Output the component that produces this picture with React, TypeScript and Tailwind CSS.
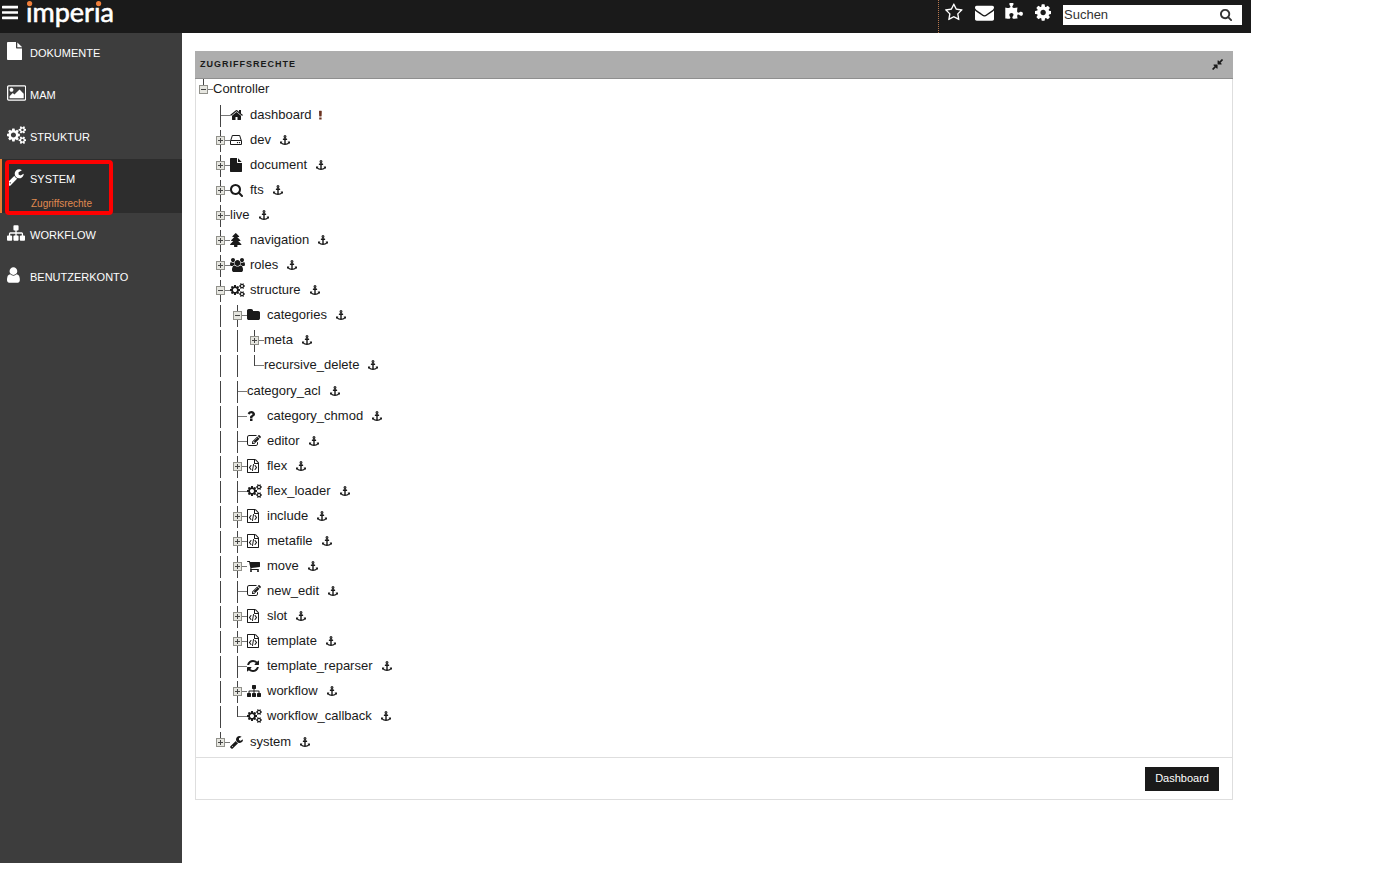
import { useState } from "react"
import type { ReactNode } from "react"

type Glyph = { box: string; d: string }

const glyphs: Record<string, Glyph> = {
  bars: { box: "128 0 1536 1792", d: "M1664 1344v128q0 26-19 45t-45 19h-1408q-26 0-45-19t-19-45v-128q0-26 19-45t45-19h1408q26 0 45 19t19 45zm0-512v128q0 26-19 45t-45 19h-1408q-26 0-45-19t-19-45v-128q0-26 19-45t45-19h1408q26 0 45 19t19 45zm0-512v128q0 26-19 45t-45 19h-1408q-26 0-45-19t-19-45v-128q0-26 19-45t45-19h1408q26 0 45 19t19 45z" },
  file: { box: "128 0 1536 1792", d: "M1152 512v-472q22 14 36 28l408 408q14 14 28 36h-472zm-128 32q0 40 28 68t68 28h544v1056q0 40-28 68t-68 28h-1344q-40 0-68-28t-28-68v-1600q0-40 28-68t68-28h800v544z" },
  picture: { box: "-64 0 1920 1792", d: "M576 576q0 80-56 136t-136 56-136-56-56-136 56-136 136-56 136 56 56 136zm1024 384v448h-1408v-192l320-320 160 160 512-512zm96-704h-1600q-13 0-22.5 9.5t-9.5 22.5v1216q0 13 9.5 22.5t22.5 9.5h1600q13 0 22.5-9.5t9.5-22.5v-1216q0-13-9.5-22.5t-22.5-9.5zm160 32v1216q0 66-47 113t-113 47h-1600q-66 0-113-47t-47-113v-1216q0-66 47-113t113-47h1600q66 0 113 47t47 113z" },
  cogs: { box: "-64 0 1920 1792", d: "M832 896q0-106-75-181t-181-75-181 75-75 181 75 181 181 75 181-75 75-181zm768 512q0-52-38-90t-90-38-90 38-38 90q0 53 37.5 90.5t90.5 37.5 90.5-37.5 37.5-90.5zm0-1024q0-52-38-90t-90-38-90 38-38 90q0 53 37.5 90.5t90.5 37.5 90.5-37.5 37.5-90.5zm-384 421v185q0 10-7 19.5t-16 10.5l-155 24q-11 35-32 76 34 48 90 115 7 11 7 20 0 12-7 19-23 30-82.5 89.5t-78.5 59.5q-11 0-21-7l-115-90q-37 19-77 31-11 108-23 155-7 24-30 24h-186q-11 0-20-7.5t-10-17.5l-23-153q-34-10-75-31l-118 89q-7 7-20 7-11 0-21-8-144-133-144-160 0-9 7-19 10-14 41-53t47-61q-23-44-35-82l-152-24q-10-1-17-9.5t-7-19.5v-185q0-10 7-19.5t16-10.5l155-24q11-35 32-76-34-48-90-115-7-11-7-20 0-12 7-20 22-30 82-89t79-59q11 0 21 7l115 90q34-18 77-32 11-108 23-154 7-24 30-24h186q11 0 20 7.5t10 17.5l23 153q34 10 75 31l118-89q8-7 20-7 11 0 21 8 144 133 144 160 0 8-7 19-12 16-42 54t-45 60q23 48 34 82l152 23q10 2 17 10.5t7 19.5zm640 533v140q0 16-149 31-12 27-30 52 51 113 51 138 0 4-4 7-122 71-124 71-8 0-46-47t-52-68q-20 2-30 2t-30-2q-14 21-52 68t-46 47q-2 0-124-71-4-3-4-7 0-25 51-138-18-25-30-52-149-15-149-31v-140q0-16 149-31 13-29 30-52-51-113-51-138 0-4 4-7 4-2 35-20t59-34 30-16q8 0 46 46.5t52 67.5q20-2 30-2t30 2q51-71 92-112l6-2q4 0 124 70 4 3 4 7 0 25-51 138 17 23 30 52 149 15 149 31zm0-1024v140q0 16-149 31-12 27-30 52 51 113 51 138 0 4-4 7-122 71-124 71-8 0-46-47t-52-68q-20 2-30 2t-30-2q-14 21-52 68t-46 47q-2 0-124-71-4-3-4-7 0-25 51-138-18-25-30-52-149-15-149-31v-140q0-16 149-31 13-29 30-52-51-113-51-138 0-4 4-7 4-2 35-20t59-34 30-16q8 0 46 46.5t52 67.5q20-2 30-2t30 2q51-71 92-112l6-2q4 0 124 70 4 3 4 7 0 25-51 138 17 23 30 52 149 15 149 31z" },
  wrench: { box: "64 0 1728 1792", d: "M448 1472q0-26-19-45t-45-19-45 19-19 45 19 45 45 19 45-19 19-45zm644-420l-682 682q-37 37-90 37-52 0-91-37l-106-108q-38-36-38-90 0-53 38-91l681-681q39 98 114.5 173.5t173.5 114.5zm634-435q0 39-23 106-47 134-164.5 217.5t-258.5 83.5q-185 0-316.5-131.5t-131.5-316.5 131.5-316.5 316.5-131.5q58 0 121.5 16.5t107.5 46.5q16 11 16 28t-16 28l-293 169v224l193 107q5-3 79-48.5t135.5-81 70.5-35.5q15 0 23.5 10t8.5 25z" },
  sitemap: { box: "0 0 1792 1792", d: "M1792 1248v320q0 40-28 68t-68 28h-320q-40 0-68-28t-28-68v-320q0-40 28-68t68-28h96v-192h-512v192h96q40 0 68 28t28 68v320q0 40-28 68t-68 28h-320q-40 0-68-28t-28-68v-320q0-40 28-68t68-28h96v-192h-512v192h96q40 0 68 28t28 68v320q0 40-28 68t-68 28h-320q-40 0-68-28t-28-68v-320q0-40 28-68t68-28h96v-192q0-52 38-90t90-38h512v-192h-96q-40 0-68-28t-28-68v-320q0-40 28-68t68-28h320q40 0 68 28t28 68v320q0 40-28 68t-68 28h-96v192h512q52 0 90 38t38 90v192h96q40 0 68 28t28 68z" },
  user: { box: "256 0 1280 1792", d: "M1536 1399q0 109-62.5 187t-150.5 78h-854q-88 0-150.5-78t-62.5-187q0-85 8.5-160.5t31.5-152 58.5-131 94-89 134.5-34.5q131 128 313 128t313-128q76 0 134.5 34.5t94 89 58.5 131 31.5 152 8.5 160.5zm-256-887q0 159-112.5 271.5t-271.5 112.5-271.5-112.5-112.5-271.5 112.5-271.5 271.5-112.5 271.5 112.5 112.5 271.5z" },
  star: { box: "64 0 1664 1792", d: "M1201 1004l306-297-422-62-189-382-189 382-422 62 306 297-73 421 378-199 377 199zm527-357q0 22-26 48l-363 354 86 500q1 7 1 20 0 50-41 50-19 0-40-12l-449-236-449 236q-22 12-40 12-21 0-31.5-14.5t-10.5-35.5q0-6 2-20l86-500-364-354q-25-27-25-48 0-37 56-46l502-73 225-455q19-41 49-41t49 41l225 455 502 73q56 9 56 46z" },
  envelope: { box: "0 0 1792 1792", d: "M1792 710v794q0 66-47 113t-113 47h-1472q-66 0-113-47t-47-113v-794q44 49 101 87 362 246 497 345 57 42 92.5 65.5t94.5 48 110 24.5h2q51 0 110-24.5t94.5-48 92.5-65.5q170-123 498-345 57-39 100-87zm0-294q0 79-49 151t-122 123q-376 261-468 325-10 7-42.5 30.5t-54 38-52 32.5-57.5 27-50 9h-2q-23 0-50-9t-57.5-27-52-32.5-54-38-42.5-30.5q-91-64-262-182.5t-205-142.5q-62-42-117-115.5t-55-136.5q0-78 41.5-130t118.5-52h1472q65 0 112.5 47t47.5 113z" },
  puzzle: { box: "64 0 1728 1792", d: "M1755 1018q0 81-44.5 135t-123.5 54q-41 0-77.5-17.5t-59-38-56.5-38-71-17.5q-110 0-110 124 0 39 16 115t15 115v5q-22 0-33 1-34 3-97.5 11.5t-115.5 13.5-98 5q-61 0-103-26.5t-42-83.5q0-37 17.5-71t38-56.5 38-59 17.5-77.5q0-79-54-123.5t-135-44.5q-84 0-143 45.5t-59 127.5q0 43 15 83t33.5 64.5 33.5 53 15 50.5q0 45-46 89-37 35-117 35-95 0-245-24-9-2-27.5-4t-27.5-4l-13-2q-1 0-3-1-2 0-2-1v-1024q2 1 17.5 3.5t34 5 21.5 3.5q150 24 245 24 80 0 117-35 46-44 46-89 0-22-15-50.5t-33.5-53-33.5-64.5-15-83q0-82 59-127.5t144-45.5q80 0 134 44.5t54 123.5q0 41-17.5 77.5t-38 59-38 56.5-17.5 71q0 57 42 83.5t103 26.5q64 0 180-15t163-17v2q-1 2-3.5 17.5t-5 34-3.5 21.5q-24 150-24 245 0 80 35 117 44 46 89 46 22 0 50.5-15t53-33.5 64.5-33.5 83-15q82 0 127.5 59t45.5 143z" },
  cog: { box: "128 0 1536 1792", d: "M1152 896q0-106-75-181t-181-75-181 75-75 181 75 181 181 75 181-75 75-181zm512-109v222q0 12-8 23t-20 13l-185 28q-19 54-39 91 35 50 107 138 10 12 10 25t-9 23q-27 37-99 108t-94 71q-12 0-26-9l-138-108q-44 23-91 38-16 136-29 186-7 28-36 28h-222q-14 0-24.5-8.5t-11.5-21.5l-28-184q-49-16-90-37l-141 107q-10 9-25 9-14 0-25-11-126-114-165-168-7-10-7-23 0-12 8-23 15-21 51-66.5t54-70.5q-27-50-41-99l-183-27q-13-2-21-12.5t-8-23.5v-222q0-12 8-23t19-13l186-28q14-46 39-92-40-57-107-138-10-12-10-24 0-10 9-23 26-36 98.5-107.5t94.5-71.5q13 0 26 10l138 107q44-23 91-38 16-136 29-186 7-28 36-28h222q14 0 24.5 8.5t11.5 21.5l28 184q49 16 90 37l142-107q9-9 24-9 13 0 25 10 129 119 165 170 7 8 7 22 0 12-8 23-15 21-51 66.5t-54 70.5q26 50 41 98l183 28q13 2 21 12.5t8 23.5z" },
  search: { box: "64 0 1664 1792", d: "M1216 832q0-185-131.5-316.5t-316.5-131.5-316.5 131.5-131.5 316.5 131.5 316.5 316.5 131.5 316.5-131.5 131.5-316.5zm512 832q0 52-38 90t-90 38q-54 0-90-38l-343-342q-179 124-399 124-143 0-273.5-55.5t-225-150-150-225-55.5-273.5 55.5-273.5 150-225 225-150 273.5-55.5 273.5 55.5 225 150 150 225 55.5 273.5q0 220-124 399l343 343q37 37 37 90z" },
  compress: { box: "128 0 1536 1792", d: "M896 960v448q0 26-19 45t-45 19-45-19l-144-144-332 332q-10 10-23 10t-23-10l-114-114q-10-10-10-23t10-23l332-332-144-144q-19-19-19-45t19-45 45-19h448q26 0 45 19t19 45zm755-672q0 13-10 23l-332 332 144 144q19 19 19 45t-19 45-45 19h-448q-26 0-45-19t-19-45v-448q0-26 19-45t45-19 45 19l144 144 332-332q10-10 23-10t23 10l114 114q10 10 10 23z" },
  home: { box: "64 0 1664 1792", d: "M1472 992v480q0 26-19 45t-45 19h-384v-384h-256v384h-384q-26 0-45-19t-19-45v-480q0-1 .5-3t.5-3l575-474 575 474q1 2 1 6zm223-69l-62 74q-8 9-21 11h-3q-13 0-21-7l-692-577-692 577q-12 8-24 7-13-2-21-11l-62-74q-8-10-7-23.5t11-21.5l719-599q32-26 76-26t76 26l244 204v-195q0-14 9-23t23-9h192q14 0 23 9t9 23v408l219 182q10 8 11 21.5t-7 23.5z" },
  hdd: { box: "128 0 1536 1792", d: "M1168 1216q0 33-23.5 56.5t-56.5 23.5-56.5-23.5-23.5-56.5 23.5-56.5 56.5-23.5 56.5 23.5 23.5 56.5zm256 0q0 33-23.5 56.5t-56.5 23.5-56.5-23.5-23.5-56.5 23.5-56.5 56.5-23.5 56.5 23.5 23.5 56.5zm112 160v-320q0-13-9.5-22.5t-22.5-9.5h-1216q-13 0-22.5 9.5t-9.5 22.5v320q0 13 9.5 22.5t22.5 9.5h1216q13 0 22.5-9.5t9.5-22.5zm-1230-480h1180l-157-482q-4-13-16-21.5t-26-8.5h-782q-14 0-26 8.5t-16 21.5zm1358 160v320q0 66-47 113t-113 47h-1216q-66 0-113-47t-47-113v-320q0-25 16-75l197-606q17-53 63-86t101-33h782q55 0 101 33t63 86l197 606q16 50 16 75z" },
  tree: { box: "128 0 1536 1792", d: "M1600 1472q0 26-19 45t-45 19h-462q1 17 6 87.5t5 108.5q0 25-18 42.5t-43 17.5h-320q-25 0-43-17.5t-18-42.5q0-38 5-108.5t6-87.5h-462q-26 0-45-19t-19-45 19-45l402-403h-229q-26 0-45-19t-19-45 19-45l402-403h-197q-26 0-45-19t-19-45 19-45l384-384q19-19 45-19t45 19l384 384q19 19 19 45t-19 45-45 19h-197l402 403q19 19 19 45t-19 45-45 19h-229l402 403q19 19 19 45z" },
  users: { box: "-64 0 1920 1792", d: "M529 896q-162 5-265 128h-134q-82 0-138-40.5t-56-118.5q0-353 124-353 6 0 43.5 21t97.5 42.5 119 21.5q67 0 133-23-5 37-5 66 0 159 81 256zm1071 637q0 120-73 189.5t-194 69.5h-874q-121 0-194-69.5t-73-189.5q0-53 3.5-103.5t14-109 26.5-108.5 43-97.5 62-81 85.5-53.5 111.5-20q10 0 43 21.5t73 48 107 48 135 21.5 135-21.5 107-48 73-48 43-21.5q61 0 111.5 20t85.5 53.5 62 81 43 97.5 26.5 108.5 14 109 3.5 103.5zm-1024-1277q0 106-75 181t-181 75-181-75-75-181 75-181 181-75 181 75 75 181zm704 384q0 159-112.5 271.5t-271.5 112.5-271.5-112.5-112.5-271.5 112.5-271.5 271.5-112.5 271.5 112.5 112.5 271.5zm576 225q0 78-56 118.5t-138 40.5h-134q-103-123-265-128 81-97 81-256 0-29-5-66 66 23 133 23 59 0 119-21.5t97.5-42.5 43.5-21q124 0 124 353zm-128-609q0 106-75 181t-181 75-181-75-75-181 75-181 181-75 181 75 75 181z" },
  folder: { box: "64 0 1664 1792", d: "M1728 608v704q0 92-66 158t-158 66h-1216q-92 0-158-66t-66-158v-960q0-92 66-158t158-66h320q92 0 158 66t66 158v32h672q92 0 158 66t66 158z" },
  question: { box: "384 0 1024 1792", d: "M1088 1256v240q0 16-12 28t-28 12h-240q-16 0-28-12t-12-28v-240q0-16 12-28t28-12h240q16 0 28 12t12 28zm316-600q0 54-15.5 101t-35 76.5-55 59.5-57.5 43.5-61 35.5q-41 23-68.5 65t-27.5 67q0 17-12 32.5t-28 15.5h-240q-15 0-25.5-18.5t-10.5-37.5v-45q0-83 65-156.5t143-108.5q59-27 84-56t25-76q0-42-46.5-74t-107.5-32q-65 0-108 29-35 25-107 115-13 16-31 16-12 0-25-8l-164-125q-13-10-15.5-25t5.5-28q160-266 464-266 80 0 161 31t146 83 106 127.5 41 158.5z" },
  edit: { box: "0 0 1792 1792", d: "M888 1184l116-116-152-152-116 116v56h96v96h56zm440-720q-16-16-33 1l-350 350q-17 17-1 33t33-1l350-350q17-17 1-33zm80 594v190q0 119-84.5 203.5t-203.5 84.5h-832q-119 0-203.5-84.5t-84.5-203.5v-832q0-119 84.5-203.5t203.5-84.5h832q63 0 117 25 15 7 18 23 3 17-9 29l-49 49q-14 14-32 8-23-6-45-6h-832q-66 0-113 47t-47 113v832q0 66 47 113t113 47h832q66 0 113-47t47-113v-126q0-13 9-22l64-64q15-15 35-7t20 29zm-96-738l288 288-672 672h-288v-288zm444 132l-92 92-288-288 92-92q28-28 68-28t68 28l152 152q28 28 28 68t-28 68z" },
  code: { box: "128 0 1536 1792", d: "M1596 380q28 28 48 76t20 88v1152q0 40-28 68t-68 28h-1344q-40 0-68-28t-28-68v-1600q0-40 28-68t68-28h896q40 0 88 20t76 48zm-444-244v376h376q-10-29-22-41l-313-313q-12-12-41-22zm384 1528v-1024h-416q-40 0-68-28t-28-68v-416h-768v1536h1280zm-928-896q8-11 21-12.5t24 6.5l51 38q11 8 12.5 21t-6.5 24l-182 243 182 243q8 11 6.5 24t-12.5 21l-51 38q-11 8-24 6.5t-21-12.5l-226-301q-14-19 0-38zm802 301q14 19 0 38l-226 301q-8 11-21 12.5t-24-6.5l-51-38q-11-8-12.5-21t6.5-24l182-243-182-243q-8-11-6.5-24t12.5-21l51-38q11-8 24-6.5t21 12.5zm-620 461q-13-2-20.5-13t-5.5-24l138-831q2-13 13-20.5t24-5.5l63 10q13 2 20.5 13t5.5 24l-138 831q-2 13-13 20.5t-24 5.5z" },
  cart: { box: "64 0 1664 1792", d: "M704 1536q0 52-38 90t-90 38-90-38-38-90 38-90 90-38 90 38 38 90zm896 0q0 52-38 90t-90 38-90-38-38-90 38-90 90-38 90 38 38 90zm128-1088v512q0 24-16.5 42.5t-40.5 21.5l-1044 122q13 60 13 70 0 16-24 64h920q26 0 45 19t19 45-19 45-45 19h-1024q-26 0-45-19t-19-45q0-11 8-31.5t16-36 21.5-40 15.5-29.5l-177-823h-204q-26 0-45-19t-19-45 19-45 45-19h256q16 0 28.5 6.5t19.5 15.5 13 24.5 8 26 5.5 29.5 4.5 26h1201q26 0 45 19t19 45z" },
  refresh: { box: "128 0 1536 1792", d: "M1639 1056q0 5-1 7-64 268-268 434.5t-478 166.5q-146 0-282.5-55t-243.5-157l-129 129q-19 19-45 19t-45-19-19-45v-448q0-26 19-45t45-19h448q26 0 45 19t19 45-19 45l-137 137q71 66 161 102t187 36q134 0 250-65t186-179q11-17 53-117 8-23 30-23h192q13 0 22.5 9.5t9.5 22.5zm25-800v448q0 26-19 45t-45 19h-448q-26 0-45-19t-19-45 19-45l138-138q-148-137-349-137-134 0-250 65t-186 179q-11 17-53 117-8 23-30 23h-199q-13 0-22.5-9.5t-9.5-22.5v-7q65-268 270-434.5t480-166.5q146 0 284 55.5t245 156.5l130-129q19-19 45-19t45 19 19 45z" },
  anchor: { box: "0 0 1792 1792", d: "M960 256q0-26-19-45t-45-19-45 19-19 45 19 45 45 19 45-19 19-45zm832 928v352q0 22-20 30-8 2-12 2-12 0-23-9l-93-93q-119 143-318.5 226.5t-429.5 83.5-429.5-83.5-318.5-226.5l-93 93q-9 9-23 9-4 0-12-2-20-8-20-30v-352q0-14 9-23t23-9h352q22 0 30 20 8 19-7 35l-100 100q67 91 189.5 153.5t271.5 82.5v-647h-192q-26 0-45-19t-19-45v-128q0-26 19-45t45-19h192v-163q-58-34-93-92.5t-35-128.5q0-106 75-181t181-75 181 75 75 181q0 70-35 128.5t-93 92.5v163h192q26 0 45 19t19 45v128q0 26-19 45t-45 19h-192v647q149-20 271.5-82.5t189.5-153.5l-100-100q-15-16-7-35 8-20 30-20h352q14 0 23 9t9 23z" },
  exclamation: { box: "640 0 448 1600", d: "M1056 1248v224q0 26-19 45t-45 19h-256q-26 0-45-19t-19-45v-224q0-26 19-45t45-19h256q26 0 45 19t19 45zm30-1056l-28 768q-1 26-20.5 45t-45.5 19h-256q-26 0-45.5-19t-20.5-45l-28-768q-1-26 17.5-45t44.5-19h320q26 0 44.5 19t17.5 45z" },
}

function Icon({ name, className }: { name: string; className: string }) {
  return (
    <svg viewBox={glyphs[name].box} className={`w-auto shrink-0 ${className}`} fill="currentColor" aria-hidden="true">
      <path d={glyphs[name].d} />
    </svg>
  )
}

type Node = { label: string; icon?: string; mark?: string; closed?: boolean; children?: Node[] }

const root: Node = {
  label: "Controller",
  mark: "none",
  children: [
    { label: "dashboard", icon: "home", mark: "exclamation" },
    { label: "dev", icon: "hdd", closed: true },
    { label: "document", icon: "file", closed: true },
    { label: "fts", icon: "search", closed: true },
    { label: "live", closed: true },
    { label: "navigation", icon: "tree", closed: true },
    { label: "roles", icon: "users", closed: true },
    {
      label: "structure",
      icon: "cogs",
      children: [
        {
          label: "categories",
          icon: "folder",
          children: [{ label: "meta", closed: true }, { label: "recursive_delete" }],
        },
        { label: "category_acl" },
        { label: "category_chmod", icon: "question" },
        { label: "editor", icon: "edit" },
        { label: "flex", icon: "code", closed: true },
        { label: "flex_loader", icon: "cogs" },
        { label: "include", icon: "code", closed: true },
        { label: "metafile", icon: "code", closed: true },
        { label: "move", icon: "cart", closed: true },
        { label: "new_edit", icon: "edit" },
        { label: "slot", icon: "code", closed: true },
        { label: "template", icon: "code", closed: true },
        { label: "template_reparser", icon: "refresh" },
        { label: "workflow", icon: "sitemap", closed: true },
        { label: "workflow_callback", icon: "cogs" },
      ],
    },
    { label: "system", icon: "wrench", closed: true },
  ],
}

// One 17x22 cell of the tree lines
function Branch({ last, sign }: { last?: boolean; sign?: "+" | "-" }) {
  return (
    <svg width="17" height="22" viewBox="0 0 17 22" className="block" shapeRendering="crispEdges" aria-hidden="true">
      <rect x="7" y="0" width="1" height={last ? 11 : 22} fill="#444" />
      <rect x="8" y="10" width="9" height="1" fill="#777" />
      {sign && (
        <>
          <rect x="3" y="6" width="9" height="9" fill="#91918b" />
          <rect x="4" y="7" width="7" height="7" fill="#e6e6e0" />
          <rect x="5" y="10" width="5" height="1" fill="#444" />
          {sign === "+" && <rect x="7" y="8" width="1" height="5" fill="#444" />}
        </>
      )}
    </svg>
  )
}

function Line() {
  return (
    <span className="flex h-[22px] w-[17px] shrink-0 pl-[7px]">
      <span className="w-px bg-[#444]" />
    </span>
  )
}

function TreeNode({ node, guides, last }: { node: Node; guides: boolean[]; last: boolean }) {
  const [open, setOpen] = useState(!!node.children)
  const sign = node.closed || node.children ? (open ? "-" : "+") : undefined

  return (
    <li>
      <div className="flex h-[25px] items-start">
        {guides.map((g, i) => (g ? <Line key={i} /> : <span key={i} className="w-[17px] shrink-0" />))}
        {sign ? (
          <button type="button" aria-label={node.label} aria-expanded={open} onClick={() => setOpen(!open)}>
            <Branch last={last} sign={sign} />
          </button>
        ) : (
          <Branch last={last} />
        )}
        <a href="#" className="flex h-5 items-center">
          {node.icon && (
            <span className="flex w-5">
              <Icon name={node.icon} className="h-[14px]" />
            </span>
          )}
          <span>{node.label}</span>
        </a>
        {node.mark !== "none" && (
          <button
            type="button"
            aria-label="Rechte"
            className={node.mark ? "ml-2 flex h-5 items-center text-[#6b3320]" : "ml-[9px] flex h-5 items-center"}
          >
            <Icon name={node.mark ?? "anchor"} className="h-[10px]" />
          </button>
        )}
      </div>
      {open && node.children && (
        <ul className={node === root ? "pt-px" : "pb-px"}>
          {node.children.map((child, i) => (
            <TreeNode
              key={child.label}
              node={child}
              guides={node === root ? [false] : [...guides, !last]}
              last={i === node.children!.length - 1}
            />
          ))}
        </ul>
      )}
    </li>
  )
}

function MenuItem({ icon, label, active, children }: { icon: string; label: string; active?: boolean; children?: ReactNode }) {
  return (
    <li className={active ? "relative mb-0.5 h-[54px] border-l-2 border-[#e87e36] bg-[#2d2d2d] pl-[5px]" : "h-[42px] pl-[7px]"}>
      <a href="#" className="flex h-9 items-center text-[11px] text-white">
        <span className="w-[23px]">
          <Icon name={icon} className="h-[18px]" />
        </span>
        <span className="pt-1">{label}</span>
      </a>
      {children}
    </li>
  )
}

export default function App() {
  const [query, setQuery] = useState("")

  return (
    <div className="min-h-screen bg-white pr-36 font-['Liberation_Sans',Arial,sans-serif] text-[13px] text-[#1a1a1a]">
      {/* Top bar */}
      <header className="flex h-[33px] items-start justify-between bg-[#1a1a1a] text-white">
        <div className="flex items-start">
          <button type="button" aria-label="Menü" className="px-0.5 pt-[3px]">
            <Icon name="bars" className="h-[19px]" />
          </button>
          <svg width="92" height="33" viewBox="0 0 92 33" className="ml-1 overflow-visible" role="img" aria-label="imperia">
            <text x="2" y="22" fill="#fff" stroke="#fff" strokeWidth="0.6" fontFamily="Lato, sans-serif" fontSize="27">ımperıa</text>
            <circle cx="5.6" cy="3.6" r="2.6" fill="#f0803c" />
            <circle cx="74.6" cy="3.6" r="2.6" fill="#f0803c" />
          </svg>
        </div>
        <div className="flex h-full items-start border-l border-dotted border-[#b8784f] pr-[9px] pl-1.5">
          <div className="flex gap-2.5 pt-[3px]">
            <button type="button" aria-label="Favoriten" className="w-5"><Icon name="star" className="h-[19px]" /></button>
            <button type="button" aria-label="Nachrichten" className="w-5"><Icon name="envelope" className="h-[19px]" /></button>
            <button type="button" aria-label="Plugins" className="w-5"><Icon name="puzzle" className="h-[19px]" /></button>
            <button type="button" aria-label="Einstellungen" className="w-5"><Icon name="cog" className="h-[19px]" /></button>
          </div>
          <form className="mt-[5px] ml-2 flex h-5 items-center bg-white text-[#333]" onSubmit={(e) => e.preventDefault()}>
            <input
              aria-label="Suchen"
              placeholder="Suchen"
              value={query}
              onChange={(e) => setQuery(e.target.value)}
              className="h-5 w-[157px] pb-0.5 pl-px text-[13px] outline-none placeholder:text-[#333]"
            />
            <button type="submit" aria-label="Suche starten" className="w-[22px] pb-0.5">
              <Icon name="search" className="h-[13px]" />
            </button>
          </form>
        </div>
      </header>

      <div className="flex min-h-[calc(100vh-65px)]">
        {/* Sidebar */}
        <nav className="w-[182px] shrink-0 bg-[#3d3d3d]">
          <ul>
            <MenuItem icon="file" label="DOKUMENTE" />
            <MenuItem icon="picture" label="MAM" />
            <MenuItem icon="cogs" label="STRUKTUR" />
            <MenuItem icon="wrench" label="SYSTEM" active>
              <a href="#" className="ml-6 block text-[10px] leading-[18px] text-[#e08a50]">Zugriffsrechte</a>
              <div className="pointer-events-none absolute top-px left-[3px] h-[55px] w-[108px] rounded-sm border-4 border-[#f00]" />
            </MenuItem>
            <MenuItem icon="sitemap" label="WORKFLOW" />
            <MenuItem icon="user" label="BENUTZERKONTO" />
          </ul>
        </nav>

        {/* Access rights */}
        <main className="min-w-0 flex-1 pt-[18px] pr-[18px] pl-[13px]">
          <section>
            <div className="flex h-7 items-center justify-between border-b border-[#8f8f8f] bg-[#adadad] pr-2.5 pl-[5px]">
              <h1 className="pt-px text-[9px] font-bold tracking-[1px]">ZUGRIFFSRECHTE</h1>
              <button type="button" aria-label="Verkleinern"><Icon name="compress" className="h-[13px]" /></button>
            </div>
            <div className="border border-t-0 border-[#dedede]">
              <ul>
                <TreeNode node={root} guides={[]} last />
              </ul>
              <div className="flex h-[42px] items-center justify-end border-t border-[#dedede] pr-[13px]">
                <button type="button" className="h-6 bg-[#1a1a1a] px-2.5 text-[11px] text-white">Dashboard</button>
              </div>
            </div>
          </section>
        </main>
      </div>
    </div>
  )
}
